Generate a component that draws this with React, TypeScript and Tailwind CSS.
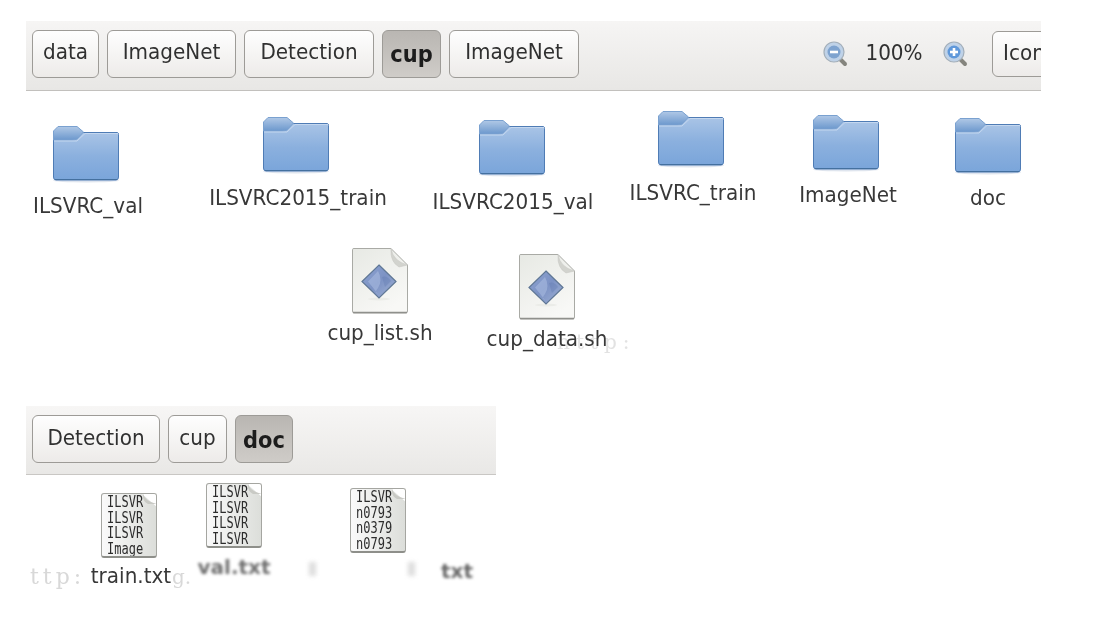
const sans = 'font-["DejaVu_Sans",sans-serif]';

type CrumbProps = {
  label: string;
  width: string;
  active?: boolean;
};

const Crumb = ({ label, width, active }: CrumbProps) => {
  return (
    <div
      className={
        active
          ? `${width} h-[48px] flex items-center justify-center pt-[3px] rounded-[6px] border border-[#9d9b97] bg-gradient-to-b from-[#b9b6b2] to-[#cfccc8] text-[21px] font-bold text-[#1c1c1c]`
          : `${width} h-[48px] flex items-center justify-center pb-[5px] rounded-[6px] border border-[#9d9b97] bg-gradient-to-b from-[#fefefe] to-[#edebe9] text-[20px] text-[#303030]`
      }
    >
      <span className="scale-y-[1.1]">{label}</span>
    </div>
  );
};

const Folder = ({ className }: { className?: string }) => {
  return (
    <svg width="68" height="58" viewBox="0 0 68 58" className={`shrink-0 ${className ?? ''}`}>
      <defs>
        <linearGradient id="folderBody" x1="0" y1="0" x2="0" y2="1">
          <stop offset="0" stopColor="#a9c4e6" />
          <stop offset="0.5" stopColor="#8bb0de" />
          <stop offset="1" stopColor="#7aa5da" />
        </linearGradient>
        <linearGradient id="folderTab" x1="0" y1="0" x2="0" y2="1">
          <stop offset="0" stopColor="#b0c8e6" />
          <stop offset="1" stopColor="#6c98cd" />
        </linearGradient>
      </defs>
      <ellipse cx="34" cy="55.5" rx="33" ry="2" fill="#dfe5ee" />
      <path d="M1.5 12 Q1.5 7.5 5 7.5 H65 Q66.5 7.5 66.5 9.5 V52 Q66.5 55 64 55 H4 Q1.5 55 1.5 52 Z" fill="url(#folderBody)" stroke="#4f7cb5" strokeWidth="1" />
      <path d="M1.5 15 V6 L6 1.5 H25 L31.5 7 L25 14 Q23 15 20 15 Z" fill="url(#folderTab)" stroke="#7aa1d0" strokeWidth="1" />
      <path d="M2 16 H25 L33 8.5 H66" fill="none" stroke="#c4d7ef" strokeWidth="1" />
      <path d="M3 54.5 H65" stroke="#44709f" strokeWidth="1.2" />
    </svg>
  );
};

const ScriptFile = () => {
  return (
    <svg width="58" height="68" viewBox="0 0 58 68" className="shrink-0">
      <defs>
        <linearGradient id="page" x1="0" y1="0" x2="0.6" y2="1">
          <stop offset="0" stopColor="#e7e9e4" />
          <stop offset="1" stopColor="#f8f8f6" />
        </linearGradient>
        <linearGradient id="gem" x1="0" y1="0" x2="1" y2="1">
          <stop offset="0" stopColor="#8ea4d2" />
          <stop offset="0.5" stopColor="#7c92c4" />
          <stop offset="1" stopColor="#a2b3d6" />
        </linearGradient>
      </defs>
      <path d="M1.5 2.5 Q1.5 1.5 3 1.5 H40 L56.5 18 V64 Q56.5 66 55 66 H3 Q1.5 66 1.5 64 Z" fill="url(#page)" stroke="#a9aaa5" strokeWidth="1" />
      <path d="M40 1.5 Q42 14 56.5 18 L48 20 Q39 15 40 1.5 Z" fill="#d2d3ce" stroke="#c4c4c0" strokeWidth="0.5" />
      <path d="M2 65.5 H56" stroke="#8f908c" strokeWidth="1.6" />
      <ellipse cx="28" cy="52" rx="11" ry="1.5" fill="#ebecE8" />
      <path d="M28 18 L45 34.5 L28 51 L11 34.5 Z" fill="url(#gem)" stroke="#5f7795" strokeWidth="1.2" />
      <path d="M27 24 Q32 33 27 41 Q23 45 27 47 L17 34.5 Z" fill="#a9bbe0" opacity="0.6" />
      <path d="M31 30 Q36 28 40 34 L34 40 Z" fill="#5f78b0" opacity="0.35" />
    </svg>
  );
};

type TextFileProps = {
  lines: string[];
};

const TextFile = ({ lines }: TextFileProps) => {
  return (
    <div className="relative w-[56px] h-[65px] shrink-0 overflow-hidden rounded-[3px] border border-[#a5a6a1] border-b-2 border-b-[#8e8f8a] bg-gradient-to-r from-[#fafafa] to-[#dcdeda] pl-[5px] pt-[1px]">
      {lines.map((line, i) => (
        <div
          key={i}
          className='h-[15.5px] origin-left scale-y-[1.3] font-["DejaVu_Sans_Mono",monospace] text-[12px] font-medium leading-[15.5px] text-[#2c2c2c]'
        >
          {line}
        </div>
      ))}
      <svg width="16" height="14" viewBox="0 0 16 14" className="absolute right-[-1px] top-[-1px]">
        <path d="M0 0 H16 V14 Z" fill="#ffffff" />
        <path d="M2 0 Q3 8 16 11 L7 11 Q1 8 2 0 Z" fill="#c9cac5" />
      </svg>
    </div>
  );
};

type ItemProps = {
  label: string;
  className: string;
  gap: string;
  children: React.ReactNode;
};

const Item = ({ label, className, gap, children }: ItemProps) => {
  return (
    <div className={`flex flex-col items-center shrink-0 ${className}`}>
      {children}
      <span className={`${gap} scale-y-[1.1] text-[20px] leading-[24px] text-[#383838] whitespace-nowrap`}>
        {label}
      </span>
    </div>
  );
};

const ZoomIcon = ({ plus }: { plus?: boolean }) => {
  return (
    <svg width="26" height="26" viewBox="0 0 26 26">
      <path d="M17.5 17.5 L23 23" stroke="#85857e" strokeWidth="4" strokeLinecap="round" />
      <circle cx="12" cy="11" r="10" fill="#bfd2e8" stroke="#a3afba" strokeWidth="1.2" />
      <circle cx="12" cy="11" r="6.5" fill={plus ? '#5f98da' : '#7ea3cf'} />
      <path d="M8 11 H16" stroke="#ffffff" strokeWidth="2.6" />
      {plus && <path d="M12 7 V15" stroke="#ffffff" strokeWidth="2.6" />}
    </svg>
  );
};

const App = () => {
  return (
    <div className={`w-[1094px] h-[644px] overflow-hidden bg-white pt-[21px] blur-[0.4px] ${sans}`}>
      <div className="ml-[26px] w-[1015px] h-[70px] flex items-center pl-[6px] pb-[4px] overflow-hidden border-b border-[#c2c0bd] bg-gradient-to-b from-[#f6f5f4] to-[#e8e7e5]">
        <div className="flex gap-[8px] shrink-0">
          <Crumb label="data" width="w-[67px]" />
          <Crumb label="ImageNet" width="w-[129px]" />
          <Crumb label="Detection" width="w-[130px]" />
          <Crumb label="cup" width="w-[59px]" active />
          <Crumb label="ImageNet" width="w-[130px]" />
        </div>
        <div className="ml-[243px] flex items-center shrink-0 text-[20px] text-[#303030]">
          <ZoomIcon />
          <span className="ml-[14px] w-[64px] pb-[3px] text-center scale-y-[1.1]">100%</span>
          <span className="ml-[16px]">
            <ZoomIcon plus />
          </span>
          <div className="ml-[24px] w-[70px] h-[46px] flex items-center pl-[10px] pb-[3px] rounded-[6px] border border-[#9d9b97] bg-gradient-to-b from-[#fefefe] to-[#edebe9]">
            <span className="scale-y-[1.1]">Icon</span>
          </div>
        </div>
      </div>

      <div className="flex items-start h-[160px] ml-[30px]">
        <Item label="ILSVRC_val" className="w-[116px] mt-[34px]" gap="mt-[10px]">
          <Folder className="mr-[4px]" />
        </Item>
        <Item label="ILSVRC2015_train" className="w-[180px] ml-[62px] mt-[25px]" gap="mt-[11px]">
          <Folder className="mr-[4px]" />
        </Item>
        <Item label="ILSVRC2015_val" className="w-[164px] ml-[43px] mt-[28px]" gap="mt-[12px]">
          <Folder className="mr-[2px]" />
        </Item>
        <Item label="ILSVRC_train" className="w-[130px] ml-[33px] mt-[19px]" gap="mt-[12px]">
          <Folder className="mr-[4px]" />
        </Item>
        <Item label="ImageNet" className="w-[102px] ml-[39px] mt-[23px]" gap="mt-[10px]">
          <Folder className="mr-[4px]" />
        </Item>
        <Item label="doc" className="w-[60px] ml-[59px] mt-[26px]" gap="mt-[10px]">
          <Folder />
        </Item>
      </div>

      <div className="relative flex items-start h-[155px] ml-[325px]">
        <span className='absolute left-[232px] top-[76px] font-["DejaVu_Serif",serif] text-[20px] tracking-[6px] text-[#e2e2e2] blur-[0.6px]'>
          http:
        </span>
        <Item label="cup_list.sh" className="relative w-[110px] mt-[-4px]" gap="mt-[5px]">
          <ScriptFile />
        </Item>
        <Item label="cup_data.sh" className="relative w-[122px] ml-[51px] mt-[2px]" gap="mt-[5px]">
          <ScriptFile />
        </Item>
      </div>

      <div className="ml-[26px] w-[470px] h-[69px] flex items-center gap-[8px] pl-[6px] pb-[2px] border-b border-[#c9c7c4] bg-gradient-to-b from-[#f7f6f5] to-[#e9e8e6]">
        <Crumb label="Detection" width="w-[128px]" />
        <Crumb label="cup" width="w-[59px]" />
        <Crumb label="doc" width="w-[58px]" active />
      </div>

      <div className="relative flex items-start ml-[30px]">
        <span className='absolute left-0 top-[85px] font-["DejaVu_Serif",serif] text-[22px] tracking-[4px] text-[#d8d8d8]'>
          ttp:
        </span>
        <span className='absolute left-[142px] top-[87px] font-["DejaVu_Serif",serif] text-[20px] text-[#d8d8d8]'>
          g.
        </span>
        <Item label="train.txt" className="relative w-[84px] ml-[57px] mt-[18px]" gap="mt-[5px] ml-[4px]">
          <TextFile lines={['ILSVR', 'ILSVR', 'ILSVR', 'Image']} />
        </Item>
        <Item label="" className="w-[56px] ml-[35px] mt-[8px]" gap="mt-[0px]">
          <TextFile lines={['ILSVR', 'ILSVR', 'ILSVR', 'ILSVR']} />
          <span className="mt-[8px] text-[20px] leading-[22px] font-bold text-[#6f6f6f] blur-[1.4px]">val.txt</span>
        </Item>
        <Item label="" className="w-[56px] ml-[88px] mt-[13px]" gap="mt-[0px]">
          <TextFile lines={['ILSVR', 'n0793', 'n0379', 'n0793']} />
        </Item>
        <span className="absolute left-[279px] top-[87px] w-[7px] h-[14px] bg-[#ddd] blur-[2px]" />
        <span className="absolute left-[378px] top-[87px] w-[7px] h-[14px] bg-[#ddd] blur-[2px]" />
        <span className="absolute left-[411px] top-[85px] text-[20px] leading-[22px] font-bold text-[#666] blur-[1.4px]">txt</span>
      </div>
    </div>
  );
};

export default App;
